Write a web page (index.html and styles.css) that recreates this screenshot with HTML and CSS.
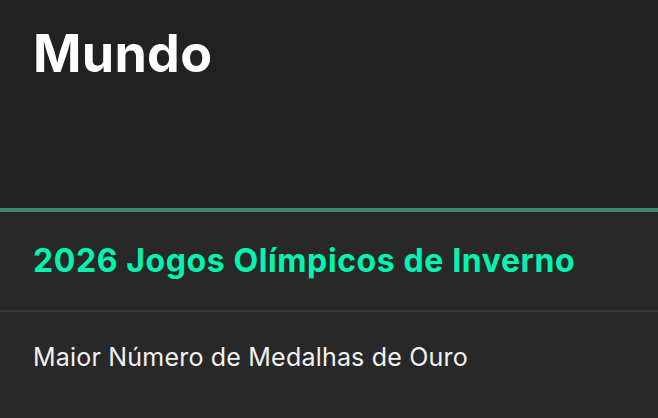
FILE: index.html
```html
<!DOCTYPE html>
<html lang="pt">
<head>
<meta charset="utf-8">
<link rel="stylesheet" href="styles.css">
</head>
<body>
<header class="top">
  <h1 class="title">Mundo</h1>
</header>
<section class="event">
  <h2 class="event-name">2026 Jogos Olímpicos de Inverno</h2>
</section>
<div class="row">
  <p class="row-label">Maior Número de Medalhas de Ouro</p>
</div>
</body>
</html>
```
FILE: styles.css
```css
html, body {
  margin: 0;
  padding: 0;
  background: #282828;
  font-family: Inter, "Noto Sans", sans-serif;
  height: 100%;
  overflow: hidden;
}
.top {
  background: #212121;
  height: 208px;
  box-sizing: border-box;
  padding: 22px 33px 0;
}
.title {
  margin: 0;
  font-size: 52px;
  line-height: 63px;
  font-weight: 700;
  color: #ffffff;
  letter-spacing: 0.3px;
}
.event {
  background: #282828;
  border-top: 4px solid #3d8b6c;
  border-bottom: 2px solid #3a3a3a;
  padding: 29px 33px 30px;
}
.event-name {
  margin: 0;
  font-size: 32px;
  line-height: 39px;
  font-weight: 700;
  color: #00f5b1;
  letter-spacing: 0.6px;
}
.row {
  padding: 30px 33px 0;
}
.row-label {
  margin: 0;
  font-size: 25px;
  line-height: 30px;
  font-weight: 400;
  color: #f2f2f2;
  letter-spacing: 0.2px;
}
```
